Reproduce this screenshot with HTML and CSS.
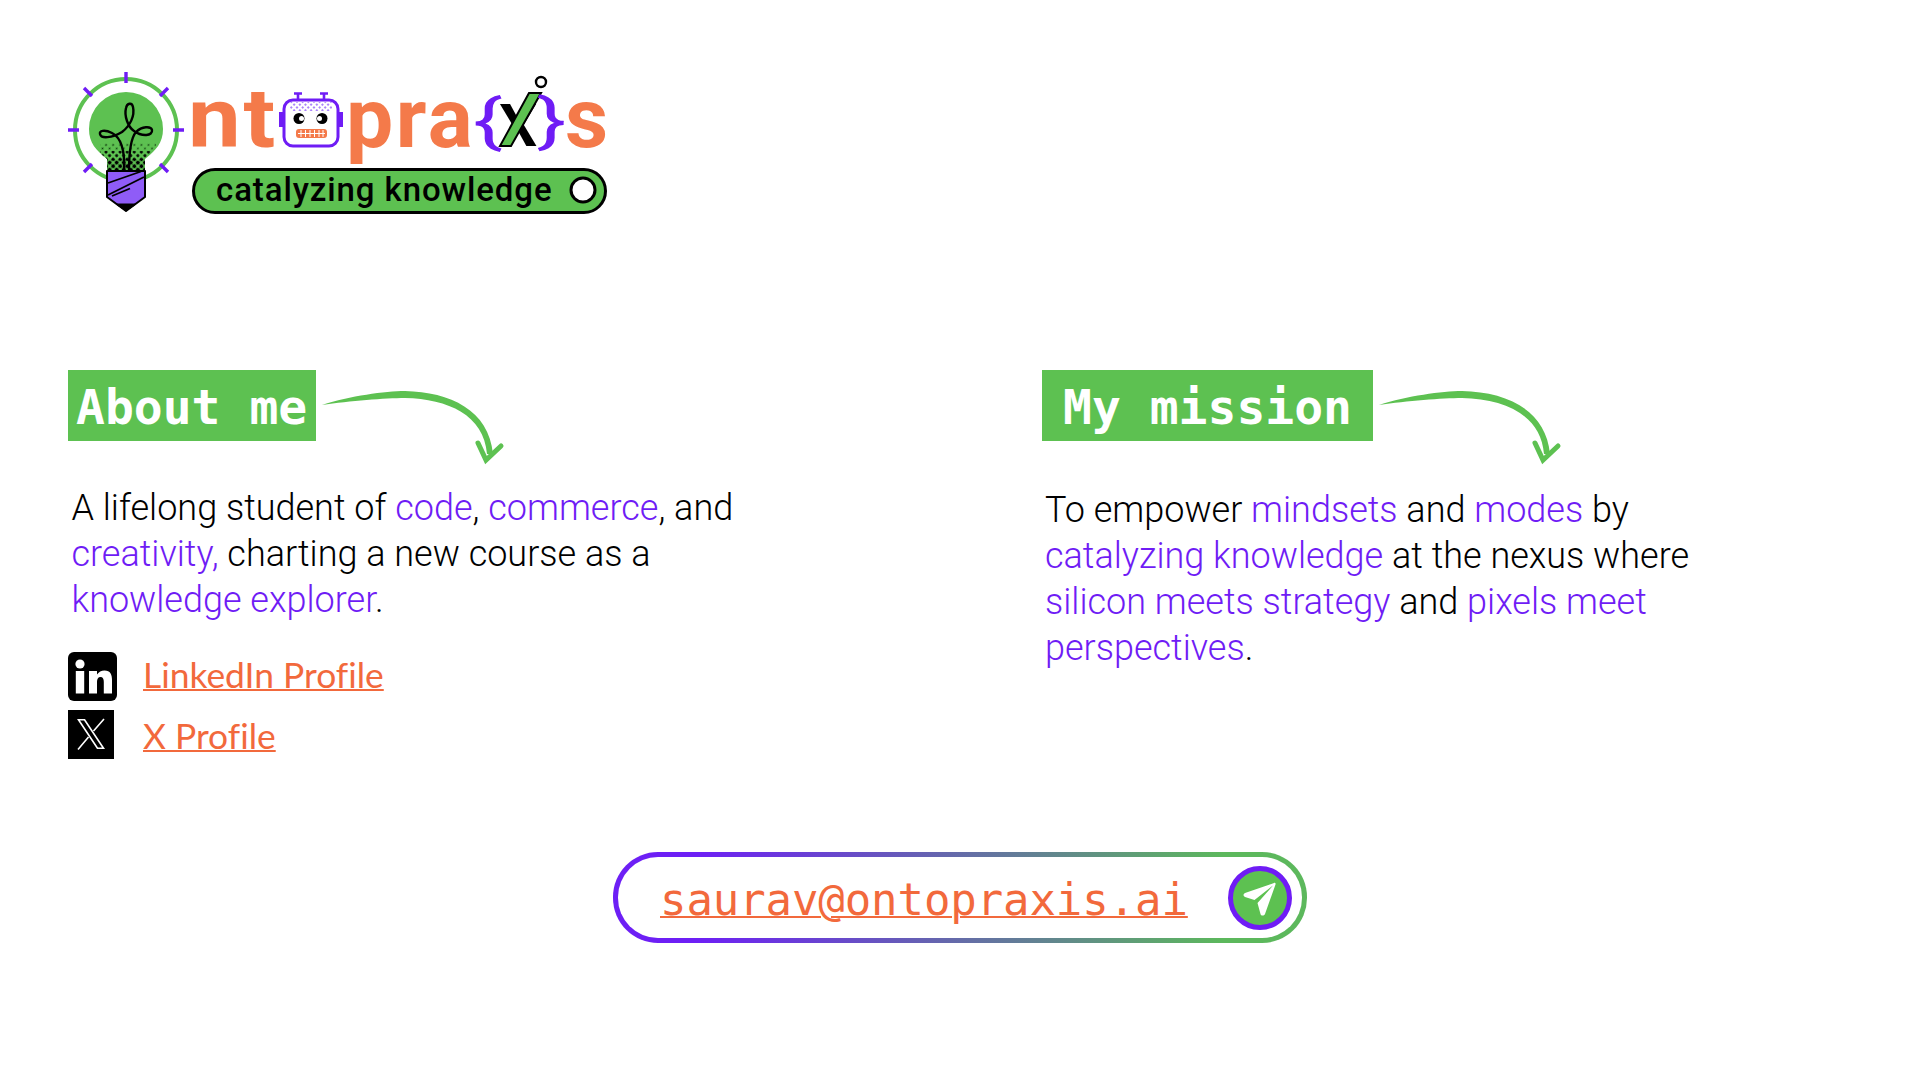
FILE: index.html
```html
<!DOCTYPE html>
<html lang="en">
<head>
<meta charset="utf-8">
<title>Ontopraxis</title>
<link rel="stylesheet" href="styles.css">
</head>
<body>
<main class="page">
  <svg class="logo" viewBox="60 60 560 170" width="560" height="170" role="img" aria-label="Ontopraxis logo">
    <defs>
      <pattern id="dotL" width="5" height="5" patternUnits="userSpaceOnUse" patternTransform="rotate(45)"><circle cx="2.5" cy="2.5" r="1.9" fill="#000"/></pattern>
      <pattern id="dotM" width="5" height="5" patternUnits="userSpaceOnUse" patternTransform="rotate(45)"><circle cx="2.5" cy="2.5" r="1.5" fill="#000"/></pattern>
      <pattern id="dotS" width="5" height="5" patternUnits="userSpaceOnUse" patternTransform="rotate(45)"><circle cx="2.5" cy="2.5" r="0.9" fill="#123f10"/></pattern>
      <pattern id="dotP" width="4" height="4" patternUnits="userSpaceOnUse" patternTransform="rotate(45)"><circle cx="2" cy="2" r="1" fill="#8f5cf7"/></pattern>
      <clipPath id="bulb"><path d="M89 129a37 37 0 0 1 74 0c0 14-7 21-18 30v12h-38v-12c-11-9-18-16-18-30z"/></clipPath>
    </defs>
    <circle cx="126" cy="130" r="51" fill="none" stroke="#5dc151" stroke-width="4"/>
    <g stroke="#6f1cf5" stroke-width="3.4">
      <path d="M126 72v11M68 130h11M173 130h11M84 88l8 8M168 88l-8 8M84 172l8-8M168 172l-8-8"/>
    </g>
    <path d="M89 129a37 37 0 0 1 74 0c0 14-7 21-18 30v12h-38v-12c-11-9-18-16-18-30z" fill="#5dc151"/>
    <g clip-path="url(#bulb)">
      <rect x="100" y="143" width="56" height="8" fill="url(#dotS)"/>
      <rect x="100" y="151" width="56" height="8" fill="url(#dotM)"/>
      <rect x="100" y="159" width="56" height="12" fill="url(#dotL)"/>
    </g>
    <path d="M124 171C125 152 122 138 112 133C104 129 99 131 100 134C101 139 112 138 122 132C130 126 135 116 133 107C132 102 127 103 126 108C124 116 128 127 134 131C142 137 153 136 152 130C151 126 142 126 136 132C130 139 129 155 129 171" fill="none" stroke="#000" stroke-width="2.4"/>
    <path d="M107 171H145V197L126 211L107 197Z" fill="#8f5cf7" stroke="#000" stroke-width="2" stroke-linejoin="round"/>
    <path d="M116 204H136L126 211Z" fill="#000" stroke="#000" stroke-linejoin="round"/>
    <path d="M108 183L141 171.500M108 195L144 177M112 196L130 188.500" fill="none" stroke="#000" stroke-width="1.800"/>

    <text class="logo-word" transform="translate(188 147) scale(1.12 1)">nt</text>

    <path d="M298 93V99M324 93V99M294 93.500H302M320 93.500H328" stroke="#6f1cf5" stroke-width="2.600"/>
    <rect x="279" y="112" width="5" height="15" fill="#6f1cf5"/>
    <rect x="338" y="112" width="5" height="15" fill="#6f1cf5"/>
    <rect x="284" y="100" width="54" height="46" rx="9" fill="#fff" stroke="#6f1cf5" stroke-width="3"/>
    <rect x="290" y="102" width="42" height="9" fill="url(#dotP)"/>
    <circle cx="299" cy="118.500" r="5.500" fill="#000"/><circle cx="301.500" cy="118.500" r="2.500" fill="#fff"/>
    <circle cx="322" cy="118.500" r="5.500" fill="#000"/><circle cx="319.500" cy="118.500" r="2.500" fill="#fff"/>
    <rect x="296" y="129" width="31" height="9" rx="3" fill="#f47a4a"/>
    <path d="M298 133.500H325M301 130V137M305.500 130V137M310 130V137M314.500 130V137M319 130V137M323 130V137" stroke="#fff" stroke-width="1"/>

    <text class="logo-word" x="346" y="147">pra</text>
    <text class="logo-brace" transform="translate(473 141) scale(1.45 1)">{</text>
    <text class="logo-x" x="499" y="146">X</text>
    <path d="M529 93H541L511 146H500Z" fill="#5dc151" stroke="#000" stroke-width="2"/>
    <circle cx="541" cy="82" r="5" fill="#fff" stroke="#000" stroke-width="2.400"/>
    <text class="logo-brace" transform="translate(537 141) scale(1.45 1)">}</text>
    <text class="logo-word" x="565" y="147">s</text>

    <rect x="193.500" y="169.500" width="412" height="43" rx="21.500" fill="#5dc151" stroke="#000" stroke-width="3"/>
    <text class="logo-tag" x="216" y="201">catalyzing knowledge</text>
    <circle cx="583" cy="190" r="12" fill="#fff" stroke="#000" stroke-width="3"/>
  </svg>

  <section class="columns">
    <article class="column">
      <header class="heading-row">
        <h2 class="heading heading-about">About me</h2>
        <svg class="arrow" viewBox="0 0 185 77" width="185" height="77" aria-hidden="true">
          <path d="M2 16C30 7 65 2 85 2C130 3 169 21 173 65L167 65C164 26 128 10 85 9C65 9 30 12 2 16Z" fill="#5dc151"/>
          <path d="M158 54L166 71L181 57" fill="none" stroke="#5dc151" stroke-width="5" stroke-linecap="round"/>
        </svg>
      </header>
      <p class="lede lede-about">A lifelong student of <em>code</em>, <em>commerce</em>, and<br><em>creativity,</em> charting a new course as a<br><em>knowledge explorer</em>.</p>
      <ul class="socials">
        <li class="social">
          <svg class="icon-in" viewBox="0 0 49 49" width="49" height="49" aria-hidden="true">
            <rect width="49" height="49" rx="6" fill="#000"/>
            <circle cx="12" cy="12" r="4.600" fill="#fff"/>
            <rect x="7.800" y="19" width="8.400" height="22.500" fill="#fff"/>
            <path d="M21 19H29V22.500C30.500 20 33.500 18.400 36.500 18.400C42.500 18.400 44 22.500 44 28V41.500H35.800V30C35.800 27 35 25 32.500 25C30 25 29 27 29 30V41.500H21Z" fill="#fff"/>
          </svg>
          <a class="social-link social-link-in" href="#">LinkedIn Profile</a>
        </li>
        <li class="social">
          <svg class="icon-x" viewBox="0 0 46 49" width="46" height="49" aria-hidden="true">
            <rect width="46" height="49" fill="#000"/>
            <path d="M9 9H17L37 39H29ZM12 10.500L30 37.500H34L16 10.500Z" fill="#fff" fill-rule="evenodd"/>
            <path d="M36 9L25.500 21M20.500 27L10 39.500" stroke="#fff" stroke-width="1.600" fill="none"/>
          </svg>
          <a class="social-link social-link-x" href="#">X Profile</a>
        </li>
      </ul>
    </article>
    <article class="column">
      <header class="heading-row">
        <h2 class="heading heading-mission">My mission</h2>
        <svg class="arrow" viewBox="0 0 185 77" width="185" height="77" aria-hidden="true">
          <path d="M2 16C30 7 65 2 85 2C130 3 169 21 173 65L167 65C164 26 128 10 85 9C65 9 30 12 2 16Z" fill="#5dc151"/>
          <path d="M158 54L166 71L181 57" fill="none" stroke="#5dc151" stroke-width="5" stroke-linecap="round"/>
        </svg>
      </header>
      <p class="lede lede-mission">To empower <em>mindsets</em> and <em>modes</em> by<br><em>catalyzing knowledge</em> at the nexus where<br><em>silicon meets strategy</em> and <em>pixels meet</em><br><em>perspectives</em>.</p>
    </article>
  </section>

  <div class="contact">
    <a class="email" href="#">saurav@ontopraxis.ai</a>
    <span class="send">
      <svg viewBox="0 0 54 54" width="54" height="54" aria-hidden="true">
        <path d="M41 12C42 11.500 43 12.500 42.500 13.500L32 43C31 45 28 45 27.500 43L24.500 32L40 14.500L21.500 29L12 26C10 25 10 23 12 22Z" fill="#fff"/>
      </svg>
    </span>
  </div>
</main>
</body>
</html>
```

FILE: styles.css
```css
html, body { margin: 0; padding: 0; background: #fff; }
.page { width: 1920px; height: 1080px; box-sizing: border-box; padding-top: 60px; font-family: "Roboto", sans-serif; color: #000; overflow: hidden; }
.logo { display: block; margin-left: 60px; }
.logo-word { font: 700 84px "Roboto", sans-serif; fill: #f47a4a; letter-spacing: 2.5px; }
.logo-brace { font: 400 60px "Roboto", sans-serif; fill: #6f1cf5; }
.logo-x { font: 700 60px "Roboto", sans-serif; fill: #000; }
.logo-tag { font: 500 33px "Roboto", sans-serif; fill: #000; letter-spacing: 0.9px; }

.columns { display: grid; grid-template-columns: 974px 1fr; padding-left: 68px; margin-top: 140px; }
.heading-row { display: flex; align-items: flex-start; height: 71px; }
.heading { margin: 0; height: 71px; background: #5dc151; color: #fff; font: 700 48px/75px "DejaVu Sans Mono", monospace; white-space: pre; }
.heading-about { padding: 0 9px 0 8px; }
.heading-mission { padding: 0 21px; }
.arrow { display: block; margin: 19px 0 0 4px; overflow: visible; }
.heading-mission + .arrow { margin-left: 4px; }

.lede { margin: 0; font-weight: 300; font-size: 36px; line-height: 46px; }
.lede em { font-style: normal; color: #6f1cf5; }
.lede-about { margin: 44px 0 0 3.5px; }
.lede-mission { margin: 46px 0 0 3px; }

.socials { list-style: none; margin: 29px 0 0; padding: 0; display: flex; flex-direction: column; gap: 9px; }
.social { display: flex; align-items: center; height: 49px; }
.icon-in { margin-right: 26px; flex: none; }
.icon-x { margin-right: 29px; flex: none; }
.social-link { font: 400 35.4px "Lato", sans-serif; font-variant-ligatures: none; color: #f2693c; text-decoration: underline; text-decoration-thickness: 2px; }
.social-link-in { margin-bottom: 5px; }
.social-link-x { margin-top: 2px; }

.contact { box-sizing: border-box; width: 694px; height: 91px; margin: 93px auto 0; border: 5px solid transparent; border-radius: 45px; display: flex; align-items: center; justify-content: space-between; padding: 0 10px 0 42px; background: linear-gradient(#fff, #fff) padding-box, linear-gradient(90deg, #6d1ff5 12%, #5cb85c 88%) border-box; }
.email { font: 400 44px "DejaVu Sans Mono", monospace; letter-spacing: -0.1px; color: #f2693c; text-decoration: underline; text-decoration-thickness: 2px; margin-top: 4px; }
.send { box-sizing: border-box; width: 64px; height: 64px; border: 5px solid #6f1cf5; border-radius: 50%; background: #5dc151; display: flex; align-items: center; justify-content: center; }
.send svg { display: block; flex: none; }
```
